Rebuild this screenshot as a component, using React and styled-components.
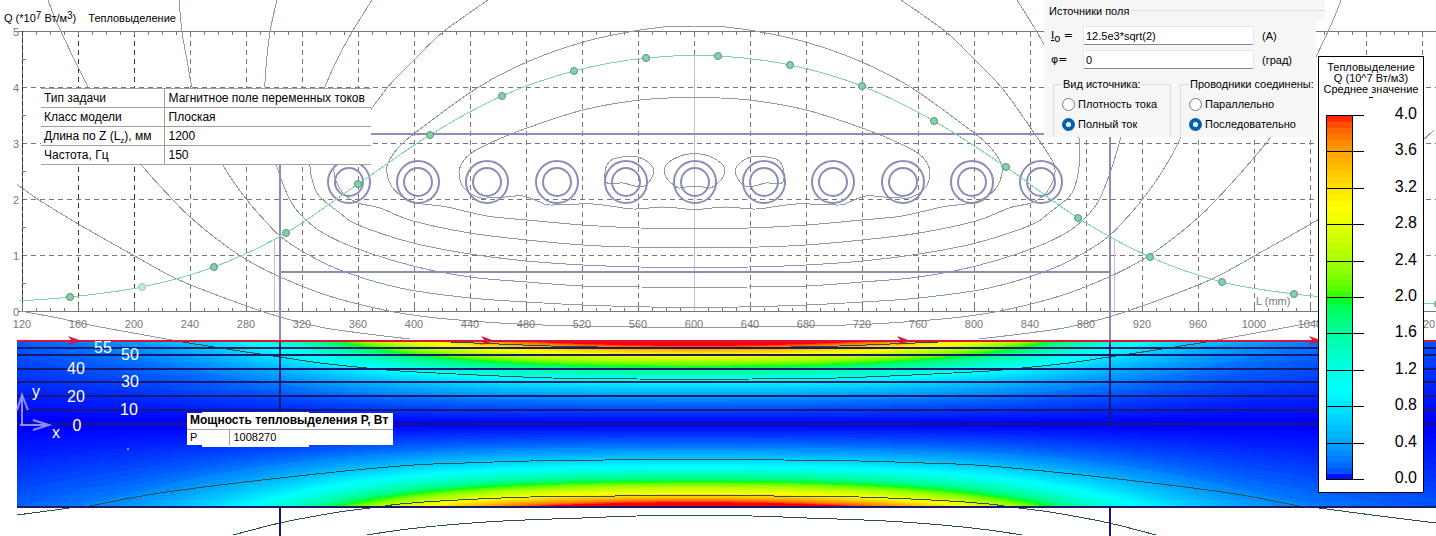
import React, { useState } from "react";
import styled, { createGlobalStyle } from "styled-components";

const AXIS_X = 695;
const BODY = { left: 17, right: 1436, top: 341, mid: 424, bottom: 507 };
const LEVELS = 60;
const MAX_Q = 4;

// surface heat release along the slab, in plot pixels
const heatPoints = [
	[-2, 303],
	[70, 297],
	[142, 287],
	[214, 267],
	[286, 233],
	[358, 184],
	[430, 135],
	[502, 96],
	[574, 71],
	[646, 58],
	[718, 56],
	[790, 65],
	[862, 86],
	[934, 121],
	[1006, 167],
	[1078, 218],
	[1150, 257],
	[1222, 282],
	[1294, 294],
	[1366, 300],
	[1438, 304],
];

const curveY = (x) => {
	const i = Math.max(
		0,
		Math.min(heatPoints.length - 2, Math.floor((x + 2) / 72))
	);
	const p1 = heatPoints[i];
	const p2 = heatPoints[i + 1];
	const p0 = heatPoints[i - 1] || p1;
	const p3 = heatPoints[i + 2] || p2;
	const t = (x - p1[0]) / (p2[0] - p1[0]);
	return (
		0.5 *
		(2 * p1[1] +
			(p2[1] - p0[1]) * t +
			(2 * p0[1] - 5 * p1[1] + 4 * p2[1] - p3[1]) * t * t +
			(3 * p1[1] - p0[1] - 3 * p2[1] + p3[1]) * t * t * t)
	);
};

const heatColor = (q) => {
	const v = Math.max(0, Math.min(MAX_Q, q));
	const segment = Math.min(3, Math.floor(v));
	const up = Math.round(255 * Math.sqrt(v - segment));
	const down = Math.round(255 * Math.sqrt(1 - (v - segment)));
	return [
		`rgb(0,${up},255)`,
		`rgb(0,255,${down})`,
		`rgb(${up},255,0)`,
		`rgb(255,${down},0)`,
	][segment];
};

const levelPath = (q) => {
	const xs = [];
	for (let x = BODY.left; x < BODY.right + 4; x += 4) xs.push(x);
	const edge = (side) =>
		xs
			.map((x) => {
				const surface = (311 - curveY(x)) / 56;
				const depth = Math.min(1, Math.pow(q / surface, 1 / 2.25));
				return `L${x} ${(BODY.mid + side * 83 * depth).toFixed(1)}`;
			})
			.join("");
	return `M17 341${edge(-1)}L1440 341Z` + `M17 507${edge(1)}L1440 507Z`;
};

const levels = Array.from({ length: LEVELS }, (_, i) => (i * MAX_Q) / LEVELS);

// the colour changes fast near zero, so the field has extra low levels
const fieldLevels = [
	0.001, 0.003, 0.006, 0.01, 0.016, 0.024, 0.034, 0.046, 0.058, 0.075, 0.1,
	0.13, 0.165, 0.2, 0.24,
	...levels.slice(4),
];

// smooth curve through points
const smooth = (pts) => {
	let d = `M${pts[0][0]} ${pts[0][1]}`;
	for (let i = 0; i < pts.length - 1; i++) {
		const p0 = pts[i - 1] || pts[i];
		const p1 = pts[i];
		const p2 = pts[i + 1];
		const p3 = pts[i + 2] || p2;
		d += `C${(p1[0] + (p2[0] - p0[0]) / 6).toFixed(1)} ${(
			p1[1] +
			(p2[1] - p0[1]) / 6
		).toFixed(1)} ${(p2[0] - (p3[0] - p1[0]) / 6).toFixed(1)} ${(
			p2[1] -
			(p3[1] - p1[1]) / 6
		).toFixed(1)} ${p2[0]} ${p2[1]}`;
	}
	return d;
};

// left halves, the field is symmetric about AXIS_X
const upperLines = [
	[[695, 97], [640, 100], [583, 110], [527, 128], [490, 143], [470, 154], [462, 163], [459, 173], [463, 187], [477, 197], [487, 198], [505, 197], [523, 196], [540, 202], [550, 205], [593, 204], [633, 209], [663, 207], [695, 210]],
	[[695, 26], [663, 27], [623, 33], [580, 43], [527, 62], [477, 88], [415, 133], [398, 148], [388, 163], [387, 173], [392, 187], [403, 197], [417, 203], [447, 207], [487, 216], [527, 220], [583, 225], [640, 228], [695, 228]],
	[[488, 0], [443, 32], [415, 59], [387, 88], [359, 127], [337, 160], [334, 170], [336, 181], [344, 194], [358, 203], [380, 208], [413, 221], [470, 233], [527, 240], [583, 245], [630, 247], [695, 248]],
	[[372, 0], [352, 32], [337, 60], [325, 87], [311, 130], [310, 167], [314, 186], [320, 197], [340, 213], [358, 225], [413, 243], [470, 254], [527, 261], [583, 265], [640, 267], [695, 267]],
	[[277, 0], [270, 32], [266, 67], [265, 87], [267, 130], [277, 167], [290, 200], [303, 217], [323, 233], [358, 249], [413, 266], [470, 277], [527, 282], [583, 286], [640, 287], [695, 287]],
	[[179, 0], [182, 32], [187, 60], [192, 87], [205, 130], [224, 167], [247, 200], [267, 223], [280, 236], [300, 250], [340, 270], [400, 288], [470, 298], [527, 302], [583, 305], [650, 307], [695, 307]],
	[[48, 0], [58, 25], [88, 87], [113, 130], [143, 167], [173, 200], [190, 217], [218, 240], [247, 260], [280, 277], [320, 293], [358, 304], [400, 313], [447, 319], [517, 324], [583, 326], [640, 327], [695, 327]],
	[[-45, 130], [-10, 162], [18, 185], [39, 200], [80, 225], [133, 255], [177, 279], [230, 300], [280, 317], [320, 327], [360, 333], [410, 339]],
	[[20, 311], [53, 317], [90, 325], [133, 333], [172, 340]],
	[[695, 153], [680, 156], [668, 163], [664, 171], [668, 180], [675, 186], [679, 188], [686, 187], [695, 187]],
	[[629, 156], [613, 159], [607, 165], [605, 173], [606, 182], [613, 184], [623, 183], [640, 187], [648, 183], [654, 171], [648, 162], [638, 157], [629, 156]],
];

const bodyLines = [
	[[422, 340], [451, 342], [499, 344], [550, 346], [598, 347], [695, 347]],
	[[172, 340], [183, 342], [233, 350], [280, 357], [320, 363], [367, 368], [400, 371], [477, 375], [552, 378], [637, 379], [695, 379]],
	[[90, 506], [160, 493], [280, 478], [400, 466], [465, 463], [530, 461], [605, 460], [695, 460]],
	[[385, 506], [400, 504], [440, 501], [530, 497], [615, 496], [695, 496]],
	[[-47, 523], [17, 515], [77, 507]],
	[[233, 535], [280, 523], [333, 513], [370, 508]],
	[[367, 535], [400, 530], [447, 525], [503, 521], [582, 518], [637, 516], [695, 516]],
];

const coils = Array.from({ length: 11 }, (_, i) => 349 + Math.round(i * 69.2));
const gridX = Array.from({ length: 26 }, (_, i) => 22 + i * 56);
const gridY = [87, 143, 199, 255];
const minorX = Array.from({ length: 101 }, (_, i) => 36 + i * 14);
const depthLines = [348, 355, 369, 382, 396, 410, 424];
const depthLabels = [
	[103, 353, "55"],
	[130, 360, "50"],
	[76, 374, "40"],
	[130, 387, "30"],
	[76, 402, "20"],
	[129, 415, "10"],
	[77, 431, "0"],
];
const scaleMarks = ["4.0", "3.6", "3.2", "2.8", "2.4", "2.0", "1.6", "1.2", "0.8", "0.4", "0.0"];

const mirror = `translate(${AXIS_X * 2 - 1} 0) scale(-1 1)`;

const FieldLines = ({ lines, color }) => {
	const paths = lines.map((pts, i) => <path key={i} d={smooth(pts)} />);
	return (
		<g
			fill="none"
			stroke={color}
			shapeRendering="crispEdges"
			clipPath="url(#frame)"
		>
			<g>{paths}</g>
			<g transform={mirror}>{paths}</g>
		</g>
	);
};

const HeatBody = () => (
	<g>
		<rect x="17" y="341" width="1419" height="166" fill={heatColor(0)} />
		<g shapeRendering="crispEdges">
			{fieldLevels.map((q) => (
				<path
					key={q}
					d={levelPath(q)}
					fill={heatColor(q < 0.26 ? q : q + 0.03)}
				/>
			))}
			<path d={levelPath(4)} fill="#ff0000" />
		</g>
		<FieldLines lines={bodyLines} color="#2f4f4f" />
		<g stroke="#191970" strokeWidth="2">
			{depthLines.map((y) => (
				<path key={y} d={`M17 ${y}H1436`} />
			))}
			<path d="M17 507H1436M280 341V424M1110 341V424M280 508V536M1110 508V536" />
		</g>
		<path d="M17 341H1436" stroke="#dc143c" strokeWidth="2" />
		{[81, 494, 910, 1322].map((x) => (
			<path
				key={x}
				d={`M${x + 1} 341L${x - 13} 336L${x - 9} 341L${x - 14} 345Z`}
				fill="#dc143c"
			/>
		))}
		<g fill="none" stroke="#8c8cff" strokeWidth="2">
			<path d="M22 425V395M17 410L22 395L28 410M20 425H49M33 420L49 425L33 430" />
			<path d="M127 449H129" />
		</g>
		<DepthText>
			{depthLabels.map(([x, y, label]) => (
				<text key={label} x={x} y={y}>
					{label}
				</text>
			))}
			<text x="36" y="397">y</text>
			<text x="56" y="438">x</text>
		</DepthText>
	</g>
);

const Plot = () => (
	<PlotSvg viewBox="0 0 1436 536" preserveAspectRatio="xMinYMin slice">
		<clipPath id="frame">
			<rect x="17" y="0" width="1419" height="536" />
		</clipPath>
		<g fill="none" stroke="#777" shapeRendering="crispEdges">
			<g strokeDasharray="5 4">
				{gridX.slice(1).map((x) => (
					<path
						key={x}
						d={`M${x + 0.5} 32V311`}
						stroke={x < 140 ? "#333" : "#777"}
					/>
				))}
				{gridY.map((y) => (
					<path key={y} d={`M22 ${y + 0.5}H1436`} />
				))}
			</g>
			<path d="M18 31.5H1436M22.5 31V311M18 311.5H1436" />
			<path d="M22.5 31V311" stroke="#333" strokeDasharray="5 2" />
			{minorX.map((x) => (
				<path key={x} d={`M${x + 0.5} 31V35M${x + 0.5} 308V311`} />
			))}
			{gridX.map((x) => (
				<path key={x} d={`M${x + 0.5} 303V311`} />
			))}
			{[59, 115, 171, 227, 283].map((y) => (
				<path key={y} d={`M22 ${y + 0.5}H26`} />
			))}
		</g>
		<path
			d="M274.5 239V311M694.5 56V311M1114.5 239V311"
			stroke="#c0c0c4"
			shapeRendering="crispEdges"
		/>
		<FieldLines lines={upperLines} color="#8c9d9d" />
		<g fill="none" stroke="#8c8cb8" strokeWidth="2">
			<path d="M280 341V134H1110V341M280 272H1110" />
			{coils.map((x) => (
				<g key={x}>
					<circle cx={x} cy="182" r="21" />
					<circle cx={x} cy="182" r="14" />
				</g>
			))}
		</g>
		<path
			d={smooth([[20, 301], ...heatPoints.slice(1)])}
			fill="none"
			stroke="#7fd4aa"
			shapeRendering="crispEdges"
		/>
		{heatPoints.slice(1).map(([x, y]) => (
			<circle
				key={x}
				cx={x}
				cy={y}
				r="3.5"
				fill={x === 142 ? "#c0ecd6" : "#7fd4aa"}
				stroke={x === 142 ? "#a9bcb2" : "#5f8f77"}
			/>
		))}
		<AxisText>
			{gridX.slice(0, 24).map((x, i) => (
				<text key={x} x={x} y="328" textAnchor="middle">
					{120 + i * 40}
				</text>
			))}
			<text x="1423" y="328">20</text>
			{[5, 4, 3, 2, 1, 0].map((n, i) => (
				<text key={n} x="19" y={36 + i * 56} textAnchor="end">
					{n}
				</text>
			))}
			<text x="1256" y="305">L (mm)</text>
		</AxisText>
		<HeatBody />
	</PlotSvg>
);

const App = () => {
	const [current, setCurrent] = useState("12.5e3*sqrt(2)");
	const [phase, setPhase] = useState("0");
	const [source, setSource] = useState("full");
	const [wiring, setWiring] = useState("serial");

	return (
		<Stage>
			<GlobalStyle />
			<Plot />
			<PlotHeader>
				<span>
					Q (*10<sup>7</sup> Вт/м<sup>3</sup>)
				</span>
				<span>Тепловыделение</span>
			</PlotHeader>

			<TaskTable>
				<tbody>
					<tr>
						<th scope="row">Тип задачи</th>
						<td>Магнитное поле переменных токов</td>
					</tr>
					<tr>
						<th scope="row">Класс модели</th>
						<td>Плоская</td>
					</tr>
					<tr>
						<th scope="row">
							Длина по Z (L<sub>z</sub>), мм
						</th>
						<td>1200</td>
					</tr>
					<tr>
						<th scope="row">Частота, Гц</th>
						<td>150</td>
					</tr>
				</tbody>
			</TaskTable>

			<PowerBox>
				<PowerTable>
					<thead>
						<tr>
							<th colSpan="2">Мощность тепловыделения P, Вт</th>
						</tr>
					</thead>
					<tbody>
						<tr>
							<td>P</td>
							<td>1008270</td>
						</tr>
					</tbody>
				</PowerTable>
			</PowerBox>

			<SourcePanel>
				<PanelTitle>Источники поля</PanelTitle>
				<Field>
					<label htmlFor="current">
						<u>I</u>
						<sub>o</sub> =
					</label>
					<input
						id="current"
						type="text"
						value={current}
						onChange={(e) => setCurrent(e.target.value)}
					/>
					<span>(A)</span>
				</Field>
				<Field>
					<label htmlFor="phase">φ=</label>
					<input
						id="phase"
						type="text"
						value={phase}
						onChange={(e) => setPhase(e.target.value)}
					/>
					<span>(град)</span>
				</Field>
				<Groups>
					<Group>
						<legend>Вид источника:</legend>
						<Option>
							<input
								type="radio"
								name="source"
								checked={source === "density"}
								onChange={() => setSource("density")}
							/>
							Плотность тока
						</Option>
						<Option>
							<input
								type="radio"
								name="source"
								checked={source === "full"}
								onChange={() => setSource("full")}
							/>
							Полный ток
						</Option>
					</Group>
					<Group $open>
						<legend>Проводники соединены:</legend>
						<Option>
							<input
								type="radio"
								name="wiring"
								checked={wiring === "parallel"}
								onChange={() => setWiring("parallel")}
							/>
							Параллельно
						</Option>
						<Option>
							<input
								type="radio"
								name="wiring"
								checked={wiring === "serial"}
								onChange={() => setWiring("serial")}
							/>
							Последовательно
						</Option>
					</Group>
				</Groups>
			</SourcePanel>

			<ScaleBox>
				<ScaleTitle>
					<span>Тепловыделение</span>
					<span>Q (10^7 Вт/м3)</span>
					<span>Среднее значение</span>
				</ScaleTitle>
				<ScaleBody>
					<svg width="40" height="368" shapeRendering="crispEdges">
						{levels.map((q, i) => (
							<rect
								key={q}
								x="1"
								y={1 + (364 * (LEVELS - 1 - i)) / LEVELS}
								width="26"
								height="7"
								fill={heatColor(i === 0 ? 0.005 : q + 0.04)}
							/>
						)).reverse()}
						<rect x="0.5" y="365" width="30" height="3" fill="#fff" />
						<path d="M0.5 0V365M26.5 0V365" stroke="#000" />
						{scaleMarks.map((m, i) => (
							<path
								key={m}
								d={`M0 ${Math.round(i * 36.4) + 0.5}H38`}
								stroke="#000"
							/>
						))}
					</svg>
					<ScaleLabels>
						{scaleMarks.map((m) => (
							<li key={m}>{m}</li>
						))}
					</ScaleLabels>
				</ScaleBody>
			</ScaleBox>
		</Stage>
	);
};

const GlobalStyle = createGlobalStyle`
	body {
		margin: 0;
		background-color: #fff;
		overflow: hidden;
	}
	* {
		box-sizing: border-box;
	}
`;

const Stage = styled.main`
	position: relative;
	overflow: hidden;
	color: #000;
	font-family: "Liberation Sans", sans-serif;
	font-size: 12px;
`;

const PlotSvg = styled.svg`
	display: block;
	width: 100%;
	height: auto;
`;

const AxisText = styled.g`
	font-size: 11px;
	fill: #777;
`;

const DepthText = styled.g`
	font-size: 16px;
	fill: #fff;
	text-anchor: middle;
`;

const PlotHeader = styled.header`
	position: absolute;
	top: 9px;
	left: 4px;
	display: flex;
	gap: 12px;
	font-size: 11px;
	line-height: 18px;
	white-space: nowrap;
	sup {
		font-size: 10px;
		line-height: 0;
		vertical-align: 3px;
	}
`;

const TaskTable = styled.table`
	position: absolute;
	top: 88px;
	left: 41px;
	width: 330px;
	border-collapse: collapse;
	table-layout: fixed;
	background-color: #fff;
	white-space: nowrap;
	tr {
		height: 19px;
		border-top: 1px solid #a0a0a0;
		border-bottom: 1px solid #a0a0a0;
	}
	th,
	td {
		padding: 0 3px;
		text-align: left;
		font-weight: normal;
		line-height: 18px;
	}
	th {
		width: 123px;
		border-right: 1px solid #a0a0a0;
	}
	td {
		padding-left: 4px;
	}
	sub {
		font-size: 8px;
		line-height: 0;
	}
`;

const PowerBox = styled.div`
	position: absolute;
	top: 413px;
	left: 187px;
	&::before {
		content: "";
		position: absolute;
		top: -1px;
		left: 15px;
		width: 107px;
		height: 35px;
		background-color: #fff;
	}
`;

const PowerTable = styled.table`
	position: relative;
	width: 206px;
	border-collapse: collapse;
	background-color: #fff;
	white-space: nowrap;
	th,
	td {
		height: 16px;
		padding: 0 3px;
		line-height: 15px;
		text-align: left;
	}
	th {
		border-bottom: 1px solid #a0a0a0;
	}
	td {
		padding-left: 4px;
		font-size: 11px;
	}
	td:first-child {
		width: 42px;
		padding-left: 3px;
		border-right: 1px solid #a0a0a0;
	}
`;

const SourcePanel = styled.section`
	position: absolute;
	top: 0;
	left: 1044px;
	width: 272px;
	height: 137px;
	display: flex;
	flex-direction: column;
	gap: 5px;
	background-color: #f6f6f6;
	font-size: 11px;
	white-space: nowrap;
`;

const PanelTitle = styled.div`
	display: flex;
	align-items: center;
	gap: 3px;
	width: 281px;
	height: 21px;
	padding-left: 5px;
	background-color: #f6f6f6;
	line-height: 20px;
	&::after {
		content: "";
		flex: 1;
		height: 1px;
		background-color: #ddd;
	}
`;

const Field = styled.div`
	display: grid;
	grid-template-columns: 32px 171px 1fr;
	align-items: center;
	height: 19px;
	padding-left: 7px;
	line-height: 18px;
	label {
		font-family: "DejaVu Sans", sans-serif;
	}
	sub {
		font-size: 10px;
		line-height: 0;
	}
	input {
		width: 171px;
		height: 19px;
		padding: 0 2px;
		border: 1px solid #e6e6e6;
		border-bottom-color: #868686;
		border-radius: 2px;
		background-color: #fff;
		color: #000;
		font-family: inherit;
		font-size: 11px;
	}
	span {
		padding-left: 8px;
	}
`;

const Groups = styled.div`
	display: grid;
	grid-template-columns: 118px 1fr;
	gap: 9px;
	padding-left: 9px;
`;

const Group = styled.fieldset`
	display: flex;
	flex-direction: column;
	min-width: 0;
	height: 62px;
	margin: 0;
	padding: 0 0 0 8px;
	border: 1px solid #dcdcdc;
	border-bottom: none;
	border-right-width: ${({ $open }) => ($open ? "0" : "1px")};
	legend {
		padding: 0 1px;
		line-height: 20px;
	}
`;

const Option = styled.label`
	display: flex;
	align-items: center;
	gap: 3px;
	height: 20px;
	input {
		appearance: none;
		width: 13px;
		height: 13px;
		margin: 0;
		border: 1px solid #777;
		border-radius: 50%;
		background-color: #fff;
		&:checked {
			border: 4px solid #0063b1;
		}
	}
`;

const ScaleBox = styled.aside`
	position: absolute;
	top: 56px;
	left: 1318px;
	width: 106px;
	height: 437px;
	border: 1px solid #000;
	background-color: #fff;
	white-space: nowrap;
`;

const ScaleTitle = styled.div`
	display: flex;
	flex-direction: column;
	align-items: center;
	height: 58px;
	padding-top: 5px;
	font-size: 11px;
	line-height: 11px;
	&::after {
		content: "";
		width: 4px;
		height: 1px;
		margin-top: 2px;
		background-color: #000;
	}
`;

const ScaleBody = styled.div`
	display: flex;
	justify-content: space-between;
	padding: 0 6px 0 7px;
`;

const ScaleLabels = styled.ul`
	display: flex;
	flex-direction: column;
	justify-content: space-between;
	height: 382px;
	margin: -10px 0 0;
	padding: 0;
	list-style: none;
	font-size: 16px;
	line-height: 18px;
`;

export default App;
